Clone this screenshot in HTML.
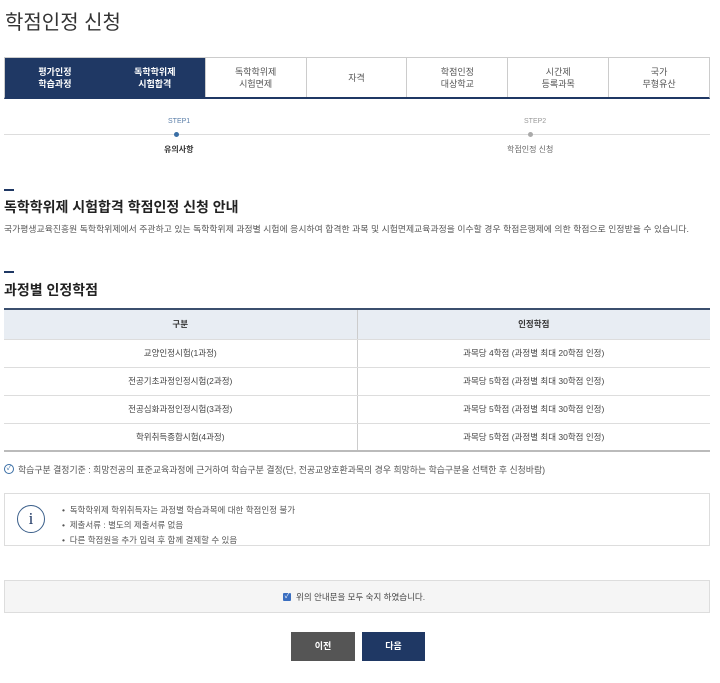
<!DOCTYPE html>
<html><head><meta charset="utf-8"><style>
*{margin:0;padding:0;box-sizing:border-box}
body{width:720px;height:683px;background:#fff;font-family:"Liberation Sans","Noto Sans CJK KR",sans-serif;color:#333;position:relative;overflow:hidden}
.a{position:absolute}
.t{font-size:20px;color:#333;left:5px;top:6px}
.tabs{left:4px;top:57px;width:706px;height:42px;display:flex;border:1px solid #ccc;border-bottom:2px solid #1f3864}
.tabs div{flex:1;display:flex;align-items:center;justify-content:center;text-align:center;font-size:9px;line-height:12px;color:#555;border-left:1px solid #ccc}
.tabs div:first-child{border-left:none}
.tabs .on{background:#1f3864;color:#fff;font-weight:bold;border-left:none}
.step{font-size:7px;color:#5a7ea8}
.bar{width:10px;height:2px;background:#1f3864;left:4px}
h2{position:absolute;left:4px;font-size:14px;font-weight:bold;color:#222}
table{position:absolute;left:4px;top:308px;width:706px;border-collapse:collapse;font-size:8.5px;color:#444;border-top:2px solid #3b4f6e;border-bottom:2px solid #bbb}
td,th{text-align:center;border-bottom:1px solid #ddd;height:28px}
th{background:#e8edf3;height:30px;font-weight:bold;color:#333}
td:first-child,th:first-child{border-right:1px solid #ccc;width:353px}
</style></head><body>
<div class="a t">학점인정 신청</div>
<div class="a tabs">
<div class="on">평가인정<br>학습과정</div><div class="on">독학학위제<br>시험합격</div><div>독학학위제<br>시험면제</div><div>자격</div><div>학점인정<br>대상학교</div><div>시간제<br>등록과목</div><div>국가<br>무형유산</div>
</div>
<div class="a step" style="left:168px;top:118px">STEP1</div>
<div class="a step" style="left:524px;top:118px;color:#999">STEP2</div>
<div class="a" style="left:4px;top:134px;width:706px;height:1px;background:#ddd"></div>
<div class="a" style="left:174px;top:132px;width:5px;height:5px;border-radius:50%;background:#3a6ea5"></div>
<div class="a" style="left:528px;top:132px;width:5px;height:5px;border-radius:50%;background:#aaa"></div>
<div class="a" style="left:164px;top:144px;font-size:8px;font-weight:bold;color:#333">유의사항</div>
<div class="a" style="left:507px;top:144px;font-size:8px;color:#666">학점인정 신청</div>
<div class="a bar" style="top:189px"></div>
<h2 style="top:197px">독학학위제 시험합격 학점인정 신청 안내</h2>
<div class="a" style="left:4px;top:222px;font-size:8.8px;letter-spacing:0.05px;color:#555;white-space:nowrap">국가평생교육진흥원 독학학위제에서 주관하고 있는 독학학위제 과정별 시험에 응시하여 합격한 과목 및 시험면제교육과정을 이수할 경우 학점은행제에 의한 학점으로 인정받을 수 있습니다.</div>
<div class="a bar" style="top:271px"></div>
<h2 style="top:280px">과정별 인정학점</h2>
<table>
<tr><th>구분</th><th>인정학점</th></tr>
<tr><td>교양인정시험(1과정)</td><td>과목당 4학점 (과정별 최대 20학점 인정)</td></tr>
<tr><td>전공기초과정인정시험(2과정)</td><td>과목당 5학점 (과정별 최대 30학점 인정)</td></tr>
<tr><td>전공심화과정인정시험(3과정)</td><td>과목당 5학점 (과정별 최대 30학점 인정)</td></tr>
<tr><td style="border-bottom:none">학위취득종합시험(4과정)</td><td style="border-bottom:none">과목당 5학점 (과정별 최대 30학점 인정)</td></tr>
</table>
<div class="a" style="left:4px;top:464px;width:10px;height:10px;border:1px solid #3a6ea5;border-radius:50%;font-size:7px;color:#3a6ea5;text-align:center;line-height:8px">✓</div>
<div class="a" style="left:18px;top:463px;font-size:8.9px;color:#555;white-space:nowrap">학습구분 결정기준 : 희망전공의 표준교육과정에 근거하여 학습구분 결정(단, 전공교양호환과목의 경우 희망하는 학습구분을 선택한 후 신청바람)</div>
<div class="a" style="left:4px;top:493px;width:706px;height:53px;border:1px solid #ddd"></div>
<div class="a" style="left:17px;top:505px;width:28px;height:28px;border:1.5px solid #3b5f8a;border-radius:50%;color:#1f3864;font-size:17px;text-align:center;line-height:26px;font-family:'Liberation Serif',serif">i</div>
<div class="a" style="left:62px;top:503px;font-size:8.5px;color:#555;line-height:15px">• &nbsp;독학학위제 학위취득자는 과정별 학습과목에 대한 학점인정 불가<br>• &nbsp;제출서류 : 별도의 제출서류 없음<br>• &nbsp;다른 학점원을 추가 입력 후 함께 결제할 수 있음</div>
<div class="a" style="left:4px;top:580px;width:706px;height:33px;border:1px solid #ddd;background:#f5f5f5"></div>
<div class="a" style="left:283px;top:593px;width:8px;height:8px;background:#3a6ec0;border-radius:1px;color:#fff;font-size:7px;line-height:8px;text-align:center">✓</div>
<div class="a" style="left:296px;top:591px;font-size:8.5px;color:#444">위의 안내문을 모두 숙지 하였습니다.</div>
<div class="a" style="left:291px;top:632px;width:64px;height:29px;background:#555;color:#fff;font-size:9px;font-weight:bold;text-align:center;line-height:29px">이전</div>
<div class="a" style="left:362px;top:632px;width:63px;height:29px;background:#1f3864;color:#fff;font-size:9px;font-weight:bold;text-align:center;line-height:29px">다음</div>
</body></html>
